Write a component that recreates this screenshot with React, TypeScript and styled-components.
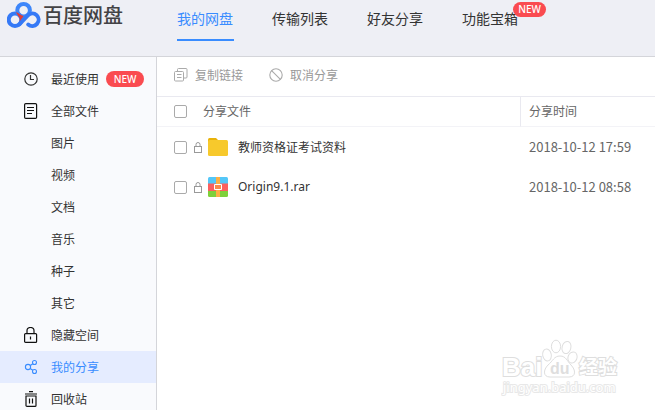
import React from "react";
import styled, { createGlobalStyle, css } from "styled-components";

const GlobalStyle = createGlobalStyle`
  *, *::before, *::after { box-sizing: border-box; }
  body {
    margin: 0;
    background: #fff;
    color: #333;
    font: 12px/20px "Noto Sans CJK SC", sans-serif;
  }
  button, input { font: inherit; color: inherit; margin: 0; }
  a { color: inherit; text-decoration: none; }
  svg { display: block; flex: none; }
`;

const Page = styled.div`
  position: relative;
  display: flex;
  flex-direction: column;
  height: 100vh;
  overflow: hidden;
`;

const Header = styled.header`
  display: flex;
  flex: none;
  align-items: flex-start;
  height: 57px;
  background: #eeeff5;
  border-bottom: 1px solid #d4d5da;
`;

const Brand = styled.a`
  display: flex;
  gap: 2px;
  width: 177px;
  padding-left: 7px;
  color: #434345;
  font-size: 20px;
  font-weight: 500;
  line-height: 30px;
  white-space: nowrap;
`;

const TopNav = styled.nav`
  display: flex;
  gap: 38px;
`;

const TopLink = styled.a<{ $active?: boolean }>`
  position: relative;
  height: 41px;
  padding-right: 1px;
  border-bottom: 2px solid ${(p) => (p.$active ? "#398cff" : "transparent")};
  color: ${(p) => (p.$active ? "#398cff" : "#333")};
  font-size: 14px;
  line-height: 36px;
  white-space: nowrap;
`;

const Badge = styled.span<{ $floating?: boolean }>`
  display: block;
  width: 38px;
  height: 16px;
  border-radius: 8px;
  background: #fa4b50;
  color: #fff;
  font: 500 10px/16px "Noto Sans", sans-serif;
  text-align: center;
  ${(p) =>
    p.$floating &&
    css`
      position: absolute;
      top: 2px;
      left: 51px;
      width: 33px;
      height: 15px;
      line-height: 15px;
    `}
`;

const Body = styled.div`
  display: flex;
  flex: 1;
  min-height: 0;
`;

const Sidebar = styled.nav`
  flex: none;
  width: 157px;
  padding-top: 6px;
  background: #f9fafd;
  border-right: 1px solid #d4d5da;
`;

const SideLink = styled.a<{ $active?: boolean }>`
  display: grid;
  grid-template-columns: 14px auto auto;
  justify-content: start;
  align-items: center;
  column-gap: 7px;
  height: 32px;
  padding-left: 24px;
  background: ${(p) => (p.$active ? "#e5ecff" : "transparent")};
  color: ${(p) => (p.$active ? "#398cff" : "#333")};
`;

const SideLabel = styled.span`
  grid-column: 2;
  padding-left: 6px;
`;

const Main = styled.main`
  flex: 1;
  min-width: 0;
`;

const Toolbar = styled.div`
  display: flex;
  align-items: center;
  gap: 26px;
  height: 40px;
  padding: 0 17px 3px;
  border-bottom: 1px solid #e9e9f0;
`;

const ToolButton = styled.button`
  display: flex;
  align-items: center;
  gap: 7px;
  padding: 0;
  border: 0;
  background: none;
  color: #999;
`;

const Files = styled.table`
  width: 100%;
  table-layout: fixed;
  border-collapse: separate;
  border-spacing: 0;
  text-align: left;
`;

const HeadCell = styled.th<{ $time?: boolean }>`
  width: ${(p) => (p.$time ? "135px" : "auto")};
  height: 30px;
  padding: 0 0 1px ${(p) => (p.$time ? "8px" : "17px")};
  border-bottom: 1px solid #f3f3f7;
  border-left: ${(p) => (p.$time ? "1px solid #e9e9f0" : "0")};
  color: #666;
  font-weight: 400;
`;

const HeadContent = styled.div`
  display: flex;
  align-items: center;
  gap: 16px;
`;

const Cell = styled.td<{ $time?: boolean }>`
  height: 40px;
  padding: 0 0 0 ${(p) => (p.$time ? "9px" : "17px")};
  color: ${(p) => (p.$time ? "#666" : "#333")};
  font-size: ${(p) => (p.$time ? "13px" : "12px")};
  white-space: nowrap;
`;

const FileContent = styled.div`
  display: flex;
  align-items: center;
`;

const Check = styled.input`
  appearance: none;
  flex: none;
  width: 13px;
  height: 13px;
  border: 1px solid #aaa;
  border-radius: 2px;
  background: #fff;
  &:checked { background: #398cff; }
`;

const LockSlot = styled.span`
  margin: 0 6px 0 7px;
`;

const FileName = styled.label<{ $latin?: boolean }>`
  padding-left: 10px;
  font-family: ${(p) => (p.$latin ? '"Noto Sans", ' : "")}"Noto Sans CJK SC", sans-serif;
`;

const Watermark = styled.div`
  position: absolute;
  right: 32px;
  bottom: 10px;
  pointer-events: none;
`;

const Logo = () => (
  <svg width="34" height="30" viewBox="0 0 34 30" fill="none" strokeWidth="4">
    <circle cx="8" cy="19.700" r="6.300" stroke="#3579f6" />
    <circle cx="16.600" cy="10.200" r="6.300" stroke="#3d86fa" />
    <path d="M12.300 24.500L20.800 15.300A6.300 6.300 0 1 1 21.200 24.500" stroke="#3579f6" strokeLinecap="round" />
    <path d="M8.900 12.300q2 .2 3.600 1.700 1.700 1.600 4.200 2l-3.900 5.300q.5-3.800-1.700-5.600z" fill="#df3c37" />
  </svg>
);

const Clock = () => (
  <svg width="14" height="14" viewBox="0 0 14 14" fill="none" stroke="#333" strokeWidth="1.200">
    <circle cx="7" cy="7" r="6.200" />
    <path d="M6.500 3v4.500H10" />
  </svg>
);
const Doc = () => (
  <svg width="14" height="16" viewBox="0 0 14 16" fill="none" stroke="#111" strokeWidth="1.200">
    <rect x=".6" y=".6" width="12" height="14.800" rx="1.200" />
    <path d="M3 4.500h7M3 7.500h7M3 10.500h5" strokeWidth="1" />
  </svg>
);
const Lock = () => (
  <svg width="14" height="16" viewBox="0 0 14 16" fill="none" stroke="#111" strokeWidth="1.200">
    <rect x=".6" y="6.600" width="12" height="8.800" rx="1" />
    <path d="M3 6.500V3.700a3.500 3.200 0 0 1 7 0v2.800M6.500 9.500v3" />
  </svg>
);
const Share = () => (
  <svg width="14" height="16" viewBox="0 0 14 16" fill="none" stroke="#398cff" strokeWidth="1.100">
    <circle cx="4" cy="8" r="2.600" />
    <circle cx="10.500" cy="3.500" r="2" />
    <circle cx="10.500" cy="12.500" r="2" />
    <path d="M6.300 6.500l2.500-1.800M6.200 9.500l2.600 1.800" />
  </svg>
);
const Trash = () => (
  <svg width="14" height="16" viewBox="0 0 14 16" fill="none" stroke="#111" strokeWidth="1.200">
    <path d="M1 3h12M5 .6h4M2 5h10v9.400a1 1 0 0 1-1 1H3a1 1 0 0 1-1-1zM5.500 7.500v5M8.500 7.500v5" />
  </svg>
);
const Copy = () => (
  <svg width="14" height="14" viewBox="0 0 14 14" fill="none" stroke="#aaa">
    <path d="M3.500 3.500V1.500a1 1 0 0 1 1-1h7.500a1 1 0 0 1 1 1v7.500a1 1 0 0 1-1 1h-2" />
    <rect x=".5" y="3.500" width="9" height="9.500" rx="1" />
    <path d="M3 6.500h4.500M3 9.500h4.500" />
  </svg>
);
const Ban = () => (
  <svg width="14" height="14" viewBox="0 0 14 14" fill="none" stroke="#aaa" strokeWidth="1.100">
    <circle cx="7" cy="7" r="6.200" />
    <path d="M2.600 2.600l8.800 8.800" />
  </svg>
);
const SmallLock = () => (
  <svg width="8" height="11" viewBox="0 0 8 11" fill="none" stroke="#999">
    <rect x=".5" y="4.500" width="7" height="6" />
    <path d="M2 4.500V2.500a2 2 0 0 1 4 0v2" />
  </svg>
);
const Folder = () => (
  <svg width="20" height="18" viewBox="0 0 20 18">
    <path d="M0 1.500Q0 0 1.500 0H8l2 2v4H0z" fill="#e9b209" />
    <rect y="2" width="20" height="16" rx="1.500" fill="#f7c92c" />
  </svg>
);
const Archive = () => (
  <svg width="20" height="20" viewBox="0 0 20 20" fill="none">
    <path d="M0 7V1.500Q0 0 1.500 0h17Q20 0 20 1.500V7z" fill="#54c7f8" />
    <path d="M0 6.500h20V14H0z" fill="#fb5f5f" />
    <path d="M0 14h20v4.500q0 1.500-1.500 1.500h-17Q0 20 0 18.500z" fill="#7ed03a" />
    <path d="M8 0h4v20H8z" fill="#fcb045" />
    <path d="M6.500 7.500h7v5h-7z" fill="#fb8a4a" stroke="#fff" />
  </svg>
);

const WatermarkArt = () => (
  <svg width="122" height="62" viewBox="0 0 122 62" fill="#fff" stroke="#dedede" strokeWidth="1" fontFamily='"Liberation Sans", sans-serif'>
    <ellipse cx="46" cy="17" rx="4.300" ry="6" transform="rotate(-12 46 17)" />
    <ellipse cx="55" cy="8.500" rx="4.600" ry="6.300" />
    <ellipse cx="65.500" cy="9.500" rx="4.400" ry="6.200" transform="rotate(15 65.500 9.500)" />
    <ellipse cx="71.500" cy="19.500" rx="4.500" ry="5.700" transform="rotate(20 71.500 19.500)" />
    <text x="1" y="38" fontSize="26" fontWeight="700" paintOrder="stroke" strokeWidth="2">Bai</text>
    <path d="M59 18c6 0 7 5 11 9 5 5 5 12-2 12H49c-7 0-7-7-2-12 5-4 6-9 12-9z" />
    <text x="49" y="36" fontSize="16" fontWeight="700" fill="#dedede" stroke="none">du</text>
    <text x="78" y="36" fontSize="19" fontWeight="700" paintOrder="stroke" strokeWidth="2" fontFamily='"Noto Sans CJK SC", sans-serif'>经验</text>
    <text x="2" y="54" fontSize="13" paintOrder="stroke" strokeWidth="2" stroke="#e8e8e8" fontFamily='"Noto Sans", sans-serif'>jingyan.baidu.com</text>
  </svg>
);

const topItems = ["我的网盘", "传输列表", "好友分享", "功能宝箱"];

const sideItems = [
  { label: "最近使用", icon: <Clock />, isNew: true },
  { label: "全部文件", icon: <Doc /> },
  { label: "图片" },
  { label: "视频" },
  { label: "文档" },
  { label: "音乐" },
  { label: "种子" },
  { label: "其它" },
  { label: "隐藏空间", icon: <Lock /> },
  { label: "我的分享", icon: <Share />, active: true },
  { label: "回收站", icon: <Trash /> },
];

const files = [
  { id: "file-1", name: "教师资格证考试资料", time: "2018-10-12 17:59", icon: <Folder /> },
  { id: "file-2", name: "Origin9.1.rar", time: "2018-10-12 08:58", icon: <Archive />, latin: true },
];

export default function App() {
  return (
    <Page>
      <GlobalStyle />
      <Header>
        <Brand href="#">
          <Logo />
          百度网盘
        </Brand>
        <TopNav>
          {topItems.map((label, i) => (
            <TopLink key={label} href="#" $active={i === 0}>
              {label}
              {i === 3 && <Badge $floating>NEW</Badge>}
            </TopLink>
          ))}
        </TopNav>
      </Header>
      <Body>
        <Sidebar>
          {sideItems.map((item) => (
            <SideLink key={item.label} href="#" $active={item.active}>
              {item.icon}
              <SideLabel>{item.label}</SideLabel>
              {item.isNew && <Badge>NEW</Badge>}
            </SideLink>
          ))}
        </Sidebar>
        <Main>
          <Toolbar>
            <ToolButton type="button">
              <Copy />
              复制链接
            </ToolButton>
            <ToolButton type="button">
              <Ban />
              取消分享
            </ToolButton>
          </Toolbar>
          <Files>
            <thead>
              <tr>
                <HeadCell>
                  <HeadContent>
                    <Check type="checkbox" id="all" />
                    <label htmlFor="all">分享文件</label>
                  </HeadContent>
                </HeadCell>
                <HeadCell $time>分享时间</HeadCell>
              </tr>
            </thead>
            <tbody>
              {files.map((file) => (
                <tr key={file.id}>
                  <Cell>
                    <FileContent>
                      <Check type="checkbox" id={file.id} />
                      <LockSlot>
                        <SmallLock />
                      </LockSlot>
                      {file.icon}
                      <FileName htmlFor={file.id} $latin={file.latin}>
                        {file.name}
                      </FileName>
                    </FileContent>
                  </Cell>
                  <Cell $time>{file.time}</Cell>
                </tr>
              ))}
            </tbody>
          </Files>
        </Main>
      </Body>
      <Watermark>
        <WatermarkArt />
      </Watermark>
    </Page>
  );
}
